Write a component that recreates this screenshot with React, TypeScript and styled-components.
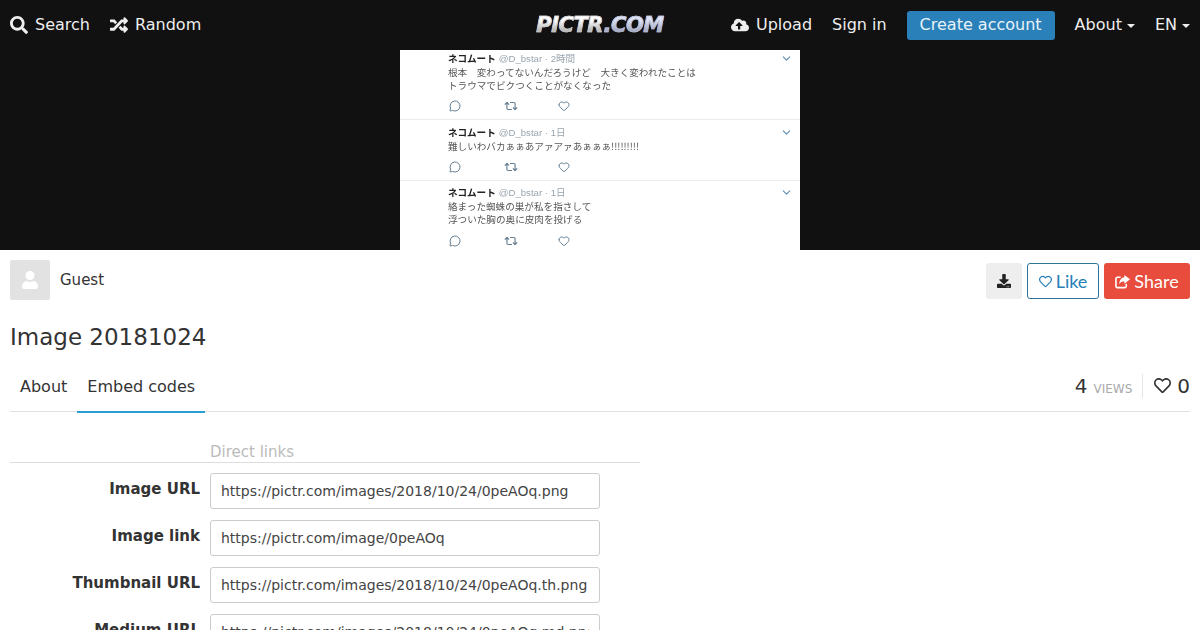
import React from "react";
import styled, { createGlobalStyle } from "styled-components";
import { FaSearch, FaRandom, FaCloudUploadAlt, FaDownload, FaRegHeart, FaUser } from "react-icons/fa";
import { ChevronDown, MessageCircle, Repeat2, Heart } from "lucide-react";

const Global = createGlobalStyle`
  html, body { margin: 0; padding: 0; background: #fff; height: 630px; overflow: hidden; }
  body { font-family: "DejaVu Sans", sans-serif; color: #333; font-size: 16px; }
  * { box-sizing: border-box; }
`;

const Page = styled.div`width: 1200px; height: 630px; overflow: hidden;`;
const Nav = styled.header`
  height: 50px; background: #111; color: #eee;
  display: grid; grid-template-columns: 1fr auto 1fr; align-items: center;
`;
const NavSide = styled.nav<{ $right?: boolean }>`
  display: flex; align-items: center; justify-content: ${p => (p.$right ? "flex-end" : "flex-start")};
`;
const NavItem = styled.a`
  display: flex; align-items: center; gap: 7px; padding: 0 10px; line-height: 50px; white-space: nowrap;
  svg { display: block; }
`;
const Caret = styled.span`
  display: inline-block; width: 0; height: 0; margin-left: 3px; margin-top: 2px;
  border-left: 4px solid transparent; border-right: 4px solid transparent; border-top: 4px solid currentColor;
`;
const CaretItem = styled(NavItem)`gap: 2px;`;
const CreateButton = styled.a`
  display: block; margin: 0 10px; height: 29px; line-height: 28px; padding: 0 13px;
  background: #2a80b9; color: #e8f2f8; border-radius: 3px; white-space: nowrap;
`;
const Logo = styled.div`
  font: italic 700 21px/50px "DejaVu Sans", sans-serif; letter-spacing: -0.45px; white-space: nowrap;
  -webkit-text-stroke: 0.7px #ccc; color: #eee;
`;
const LogoBright = styled.span`
  background: linear-gradient(#fff 30%, #bbb 70%); -webkit-background-clip: text; background-clip: text;
  -webkit-text-fill-color: transparent;
`;
const LogoDim = styled.span`
  -webkit-text-stroke: 0.7px #b9bfd6;
  background: linear-gradient(#dde2f4 30%, #a9afc6 70%); -webkit-background-clip: text; background-clip: text;
  -webkit-text-fill-color: transparent;
`;

const Stage = styled.section`height: 200px; background: #111; display: flex; justify-content: center;`;
const Shot = styled.div`
  width: 400px; height: 200px; background: #fff; overflow: hidden; filter: blur(0.35px);
  font-family: "Noto Sans CJK JP", sans-serif; color: #444;
`;
const Tweet = styled.article<{ $h: number; $pt: number; $last?: boolean }>`
  height: ${p => p.$h}px; padding: ${p => p.$pt}px 7px 0 48px;
  border-bottom: ${p => (p.$last ? "none" : "1px solid #e8ecef")};
  display: flex; flex-direction: column;
`;
const TweetHead = styled.div`
  display: flex; align-items: center; justify-content: space-between; height: 13px;
  svg { color: #5f8cae; display: block; }
`;
const HeadText = styled.div`display: flex; align-items: baseline; line-height: 13px; font-size: 9.6px;`;
const Author = styled.span`font-size: 9.6px; font-weight: 700; color: #222;`;
const Handle = styled.span`font-size: 9.6px; color: #9aa5ae; margin-left: 3px; font-family: "Liberation Sans", "Noto Sans CJK JP", sans-serif;`;
const TweetLines = styled.div`font-size: 9.6px; line-height: 13px; padding-top: 1px; white-space: pre; color: #555;`;
const TweetActions = styled.div<{ $mt: number }>`
  display: flex; margin-top: ${p => p.$mt}px; margin-left: 1px; color: #667f92; height: 14px; align-items: center;
`;
const ActionSlot = styled.span`width: 54.5px; svg { display: block; }`;

const Content = styled.main`padding: 10px 10px 0;`;
const UserRow = styled.div`display: flex; justify-content: space-between; align-items: flex-start; height: 40px;`;
const UserInfo = styled.div`display: flex; align-items: center; gap: 10px; font-size: 15px; height: 40px; padding-bottom: 1px;`;
const Avatar = styled.div`
  width: 40px; height: 40px; background: #e2e2e2; color: #fff; border-radius: 2px; flex: none;
  display: flex; align-items: center; justify-content: center;
`;
const Actions = styled.div`display: flex; gap: 5px; margin-top: 3px;`;
const ActionButton = styled.button<{ $kind: "plain" | "like" | "share" }>`
  height: 36px; border-radius: 3px; padding: 0; font: 400 18px/1 Lato, sans-serif;
  display: flex; align-items: center; justify-content: center; gap: 4px; cursor: pointer;
  width: ${p => (p.$kind === "plain" ? 36 : p.$kind === "like" ? 72 : 86)}px;
  background: ${p => (p.$kind === "plain" ? "#eee" : p.$kind === "like" ? "#fff" : "#e74c3c")};
  color: ${p => (p.$kind === "plain" ? "#222" : p.$kind === "like" ? "#2980b9" : "#fff")};
  border: ${p => (p.$kind === "like" ? "1px solid #2a7496" : "none")};
`;
const Title = styled.h1`margin: 23px 0 0; font-size: 23px; font-weight: 400; line-height: 29px;`;
const TabBar = styled.div`
  margin-top: 10px; height: 50px; border-bottom: 1px solid #e0e0e0;
  display: flex; justify-content: space-between; align-items: stretch;
`;
const Tabs = styled.div`display: flex;`;
const Tab = styled.a<{ $active?: boolean }>`
  padding: 0 10px; line-height: 50px; height: 51px;
  border-bottom: 2px solid ${p => (p.$active ? "#2a9fd0" : "transparent")};
`;
const Stats = styled.div`display: flex; align-items: center; padding-bottom: 2px;`;
const Count = styled.span`font-size: 20px;`;
const Views = styled.span`font-size: 12px; color: #aaa; margin-left: 6px; padding-top: 6px;`;
const Divider = styled.span`width: 1px; height: 24px; background: #e4e4e4; margin: 0 11px 0 10px;`;
const Likes = styled.span`display: flex; align-items: center; gap: 6px; font-size: 20px; svg { display: block; }`;

const Form = styled.form`width: 630px; margin-top: 29px;`;
const Legend = styled.div`
  padding-left: 200px; height: 22px; line-height: 22px; font-size: 15px; color: #bbb; border-bottom: 1px solid #ddd; margin-bottom: 10px;
`;
const Row = styled.div`display: flex; gap: 10px; margin-bottom: 11px;`;
const Label = styled.label`width: 190px; text-align: right; font-weight: 700; font-size: 15px; line-height: 32px;`;
const Field = styled.input`
  width: 390px; height: 36px; padding: 0 10px; border: 1px solid #ccc; border-radius: 3px;
  font: 14px "DejaVu Sans", sans-serif; color: #444; background: #fff; outline: none;
`;

const ShareIcon = () => (
  <svg width="15" height="15" viewBox="0 0 16 15" fill="none" stroke="currentColor" strokeWidth="1.7">
    <path d="M6 3H2.5A1.5 1.5 0 0 0 1 4.5v8A1.5 1.5 0 0 0 2.5 14h8a1.5 1.5 0 0 0 1.5-1.5V10" />
    <path d="M10 0.5l6 4.7-6 4.7V7.4C7.5 7.4 5.5 8 4.6 10.5 4.6 6 7 3.3 10 3z" fill="currentColor" stroke="none" />
  </svg>
);

const tweets = [
  { h: 70, pt: 2, time: "2時間", lines: "根本　変わってないんだろうけど　大きく変われたことは\nトラウマでビクつくことがなくなった", mt: 7 },
  { h: 61, pt: 6, time: "1日", lines: "難しいわバカぁぁあアァアァあぁぁぁ!!!!!!!!!", mt: 7 },
  { h: 69, pt: 5, time: "1日", lines: "絡まった蜘蛛の巣が私を指さして\n浮ついた胸の奥に皮肉を投げる", mt: 8 },
];
const links: [string, string][] = [
  ["Image URL", "https://pictr.com/images/2018/10/24/0peAOq.png"],
  ["Image link", "https://pictr.com/image/0peAOq"],
  ["Thumbnail URL", "https://pictr.com/images/2018/10/24/0peAOq.th.png"],
  ["Medium URL", "https://pictr.com/images/2018/10/24/0peAOq.md.png"],
];

export default function App() {
  return (
    <Page>
      <Global />
      <Nav>
        <NavSide>
          <NavItem><FaSearch size={18} />Search</NavItem>
          <NavItem><FaRandom size={18} />Random</NavItem>
        </NavSide>
        <Logo><LogoBright>PICTR</LogoBright><LogoDim>.COM</LogoDim></Logo>
        <NavSide $right>
          <NavItem><FaCloudUploadAlt size={18} />Upload</NavItem>
          <NavItem>Sign in</NavItem>
          <CreateButton>Create account</CreateButton>
          <CaretItem>About<Caret /></CaretItem>
          <CaretItem>EN<Caret /></CaretItem>
        </NavSide>
      </Nav>
      <Stage>
        <Shot>
          {tweets.map((t, i) => (
            <Tweet key={i} $h={t.h} $pt={t.pt} $last={i === 2}>
              <TweetHead>
                <HeadText><Author>ネコムート</Author><Handle>@D_bstar · {t.time}</Handle></HeadText>
                <ChevronDown size={13} />
              </TweetHead>
              <TweetLines>{t.lines}</TweetLines>
              <TweetActions $mt={t.mt}>
                <ActionSlot><MessageCircle size={12} /></ActionSlot>
                <ActionSlot><Repeat2 size={14} /></ActionSlot>
                <ActionSlot><Heart size={12} /></ActionSlot>
              </TweetActions>
            </Tweet>
          ))}
        </Shot>
      </Stage>
      <Content>
        <UserRow>
          <UserInfo><Avatar><FaUser size={18} /></Avatar>Guest</UserInfo>
          <Actions>
            <ActionButton $kind="plain" type="button"><FaDownload size={14} /></ActionButton>
            <ActionButton $kind="like" type="button"><FaRegHeart size={13} />Like</ActionButton>
            <ActionButton $kind="share" type="button"><ShareIcon />Share</ActionButton>
          </Actions>
        </UserRow>
        <Title>Image 20181024</Title>
        <TabBar>
          <Tabs>
            <Tab>About</Tab>
            <Tab $active>Embed codes</Tab>
          </Tabs>
          <Stats>
            <Count>4</Count>
            <Views>VIEWS</Views>
            <Divider />
            <Likes><FaRegHeart size={17} />0</Likes>
          </Stats>
        </TabBar>
        <Form>
          <Legend>Direct links</Legend>
          {links.map(([l, v]) => (
            <Row key={l}>
              <Label>{l}</Label>
              <Field readOnly value={v} />
            </Row>
          ))}
        </Form>
      </Content>
    </Page>
  );
}
